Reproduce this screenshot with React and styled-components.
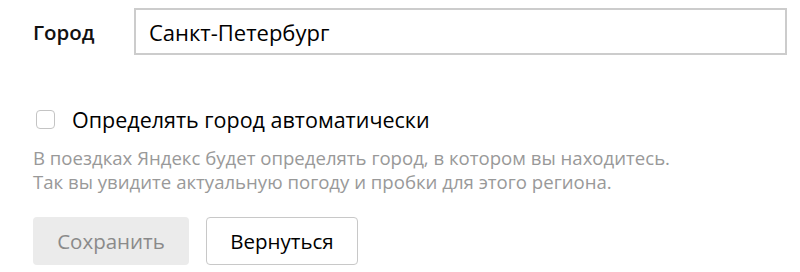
import React, { useState } from "react";
import styled, { createGlobalStyle } from "styled-components";

const Global = createGlobalStyle`
	body {
		margin: 0;
		background: #fff;
		font-family: "Open Sans", "Noto Sans", sans-serif;
		color: #000;
	}
`;

const Page = styled.div`
	padding: 8px 13px 0 33px;
	width: 800px;
	box-sizing: border-box;
`;

const FieldRow = styled.div`
	display: flex;
	align-items: center;
`;

const Label = styled.label`
	width: 101px;
	font-size: 20.5px;
	font-weight: 600;
	color: #111;
`;

const Input = styled.input`
	flex: 1;
	height: 47px;
	box-sizing: border-box;
	border: 2px solid #cccccc;
	padding: 0 13px;
	font-family: inherit;
	font-size: 22px;
	color: #000;
	outline: none;
`;

const CheckRow = styled.label`
	display: flex;
	align-items: center;
	gap: 17px;
	margin-top: 51px;
	padding-left: 3px;
	font-size: 21.5px;
	line-height: 27px;
	cursor: pointer;
`;

const Box = styled.span`
	width: 19px;
	height: 19px;
	box-sizing: border-box;
	border: 1px solid #c4c4c4;
	border-radius: 4px;
	background: ${(p) => (p.checked ? "#ffdb4d" : "#fff")};
`;

const Hint = styled.p`
	margin: 13px 0 0;
	font-size: 18.6px;
	line-height: 24px;
	color: #999999;
`;

const Buttons = styled.div`
	display: flex;
	gap: 17px;
	margin-top: 23px;
`;

const Button = styled.button`
	height: 48px;
	box-sizing: border-box;
	padding: 0;
	border-radius: 4px;
	font-family: inherit;
	font-size: 20.5px;
	border: ${(p) => (p.disabled ? "none" : "1px solid #c8c8c8")};
	background: ${(p) => (p.disabled ? "#ebebeb" : "#fff")};
	color: ${(p) => (p.disabled ? "#8a8a8a" : "#000")};
	width: ${(p) => p.w}px;
	cursor: ${(p) => (p.disabled ? "default" : "pointer")};
`;

export default function App() {
	const [city, setCity] = useState("Санкт-Петербург");
	const [auto, setAuto] = useState(false);
	return (
		<Page>
			<Global />
			<FieldRow>
				<Label>Город</Label>
				<Input value={city} onChange={(e) => setCity(e.target.value)} />
			</FieldRow>
			<CheckRow onClick={() => setAuto(!auto)}>
				<Box checked={auto} />
				Определять город автоматически
			</CheckRow>
			<Hint>
				В поездках Яндекс будет определять город, в котором вы находитесь.
				<br />
				Так вы увидите актуальную погоду и пробки для этого региона.
			</Hint>
			<Buttons>
				<Button disabled w={156}>Сохранить</Button>
				<Button w={152}>Вернуться</Button>
			</Buttons>
		</Page>
	);
}
